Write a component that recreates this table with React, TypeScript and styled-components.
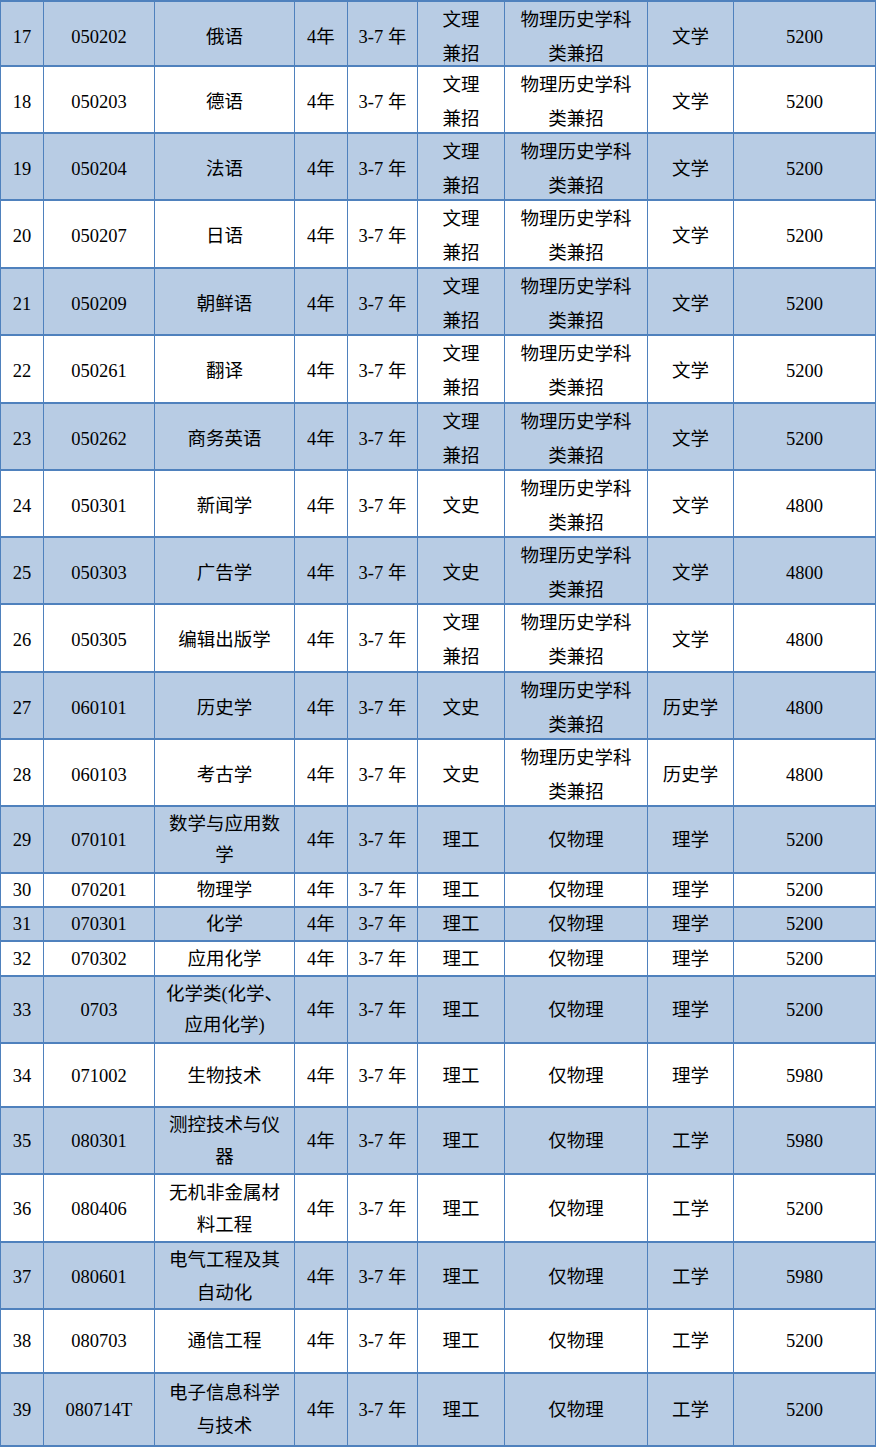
import React from "react";
import styled, { createGlobalStyle } from "styled-components";

const GlobalStyle = createGlobalStyle`
  html, body { margin: 0; padding: 0; background: #ffffff; }
  body { font-family: "Liberation Serif", "Noto Sans CJK SC", serif; color: #000; }
`;

const LINE = "#4f81bd";
const SHADE = "#b8cce4";

const Table = styled.div`
  width: 876px;
  border-top: 2px solid ${LINE};
  border-left: 1px solid ${LINE};
  box-sizing: border-box;
  display: flex;
  flex-direction: column;
`;

const Row = styled.div<{ $h: number; $shade: boolean; $lh: number }>`
  display: grid;
  grid-template-columns: 43px 111px 140px 53px 70px 87px 143px 86px 142px;
  height: ${(p) => p.$h}px;
  line-height: ${(p) => p.$lh}px;
  box-sizing: border-box;
  border-bottom: 2px solid ${LINE};
  background: ${(p) => (p.$shade ? SHADE : "#ffffff")};
`;

const Cell = styled.div`
  box-sizing: border-box;
  border-right: 1px solid ${LINE};
  padding-top: 1px;
  display: flex;
  flex-direction: column;
  align-items: center;
  justify-content: center;
  font-family: "Liberation Serif", "Noto Sans CJK SC", serif;
  font-size: 18.5px;
  text-align: center;
  white-space: nowrap;
`;

const Line = styled.span`
  display: block;
`;

type R = {
  no: string;
  code: string;
  name: string[];
  cls: string[];
  req: string[];
  cat: string;
  fee: string;
  h: number;
  lh: number;
};

const WL = ["文理", "兼招"];
const WS = ["文史"];
const LG = ["理工"];
const PH = ["物理历史学科", "类兼招"];
const OP = ["仅物理"];

const rows: R[] = [
  { no: "17", code: "050202", name: ["俄语"], cls: WL, req: PH, cat: "文学", fee: "5200", h: 65, lh: 34 },
  { no: "18", code: "050203", name: ["德语"], cls: WL, req: PH, cat: "文学", fee: "5200", h: 67, lh: 34 },
  { no: "19", code: "050204", name: ["法语"], cls: WL, req: PH, cat: "文学", fee: "5200", h: 67, lh: 34 },
  { no: "20", code: "050207", name: ["日语"], cls: WL, req: PH, cat: "文学", fee: "5200", h: 68, lh: 34 },
  { no: "21", code: "050209", name: ["朝鲜语"], cls: WL, req: PH, cat: "文学", fee: "5200", h: 67, lh: 34 },
  { no: "22", code: "050261", name: ["翻译"], cls: WL, req: PH, cat: "文学", fee: "5200", h: 68, lh: 34 },
  { no: "23", code: "050262", name: ["商务英语"], cls: WL, req: PH, cat: "文学", fee: "5200", h: 67, lh: 34 },
  { no: "24", code: "050301", name: ["新闻学"], cls: WS, req: PH, cat: "文学", fee: "4800", h: 67, lh: 34 },
  { no: "25", code: "050303", name: ["广告学"], cls: WS, req: PH, cat: "文学", fee: "4800", h: 67, lh: 34 },
  { no: "26", code: "050305", name: ["编辑出版学"], cls: WL, req: PH, cat: "文学", fee: "4800", h: 68, lh: 34 },
  { no: "27", code: "060101", name: ["历史学"], cls: WS, req: PH, cat: "历史学", fee: "4800", h: 67, lh: 34 },
  { no: "28", code: "060103", name: ["考古学"], cls: WS, req: PH, cat: "历史学", fee: "4800", h: 67, lh: 34 },
  { no: "29", code: "070101", name: ["数学与应用数", "学"], cls: LG, req: OP, cat: "理学", fee: "5200", h: 67, lh: 31 },
  { no: "30", code: "070201", name: ["物理学"], cls: LG, req: OP, cat: "理学", fee: "5200", h: 34, lh: 31 },
  { no: "31", code: "070301", name: ["化学"], cls: LG, req: OP, cat: "理学", fee: "5200", h: 34, lh: 31 },
  { no: "32", code: "070302", name: ["应用化学"], cls: LG, req: OP, cat: "理学", fee: "5200", h: 35, lh: 31 },
  { no: "33", code: "0703", name: ["化学类(化学、", "应用化学)"], cls: LG, req: OP, cat: "理学", fee: "5200", h: 67, lh: 31 },
  { no: "34", code: "071002", name: ["生物技术"], cls: LG, req: OP, cat: "理学", fee: "5980", h: 64, lh: 32 },
  { no: "35", code: "080301", name: ["测控技术与仪", "器"], cls: LG, req: OP, cat: "工学", fee: "5980", h: 67, lh: 32 },
  { no: "36", code: "080406", name: ["无机非金属材", "料工程"], cls: LG, req: OP, cat: "工学", fee: "5200", h: 68, lh: 32 },
  { no: "37", code: "080601", name: ["电气工程及其", "自动化"], cls: LG, req: OP, cat: "工学", fee: "5980", h: 67, lh: 33 },
  { no: "38", code: "080703", name: ["通信工程"], cls: LG, req: OP, cat: "工学", fee: "5200", h: 64, lh: 33 },
  { no: "39", code: "080714T", name: ["电子信息科学", "与技术"], cls: LG, req: OP, cat: "工学", fee: "5200", h: 73, lh: 33 },
];

const Lines = ({ items }: { items: string[] }) => (
  <>
    {items.map((t, i) => (
      <Line key={i}>{t}</Line>
    ))}
  </>
);

export default function App() {
  return (
    <>
      <GlobalStyle />
      <Table>
        {rows.map((r) => (
          <Row key={r.no} $h={r.h} $lh={r.lh} $shade={parseInt(r.no, 10) % 2 === 1}>
            <Cell>{r.no}</Cell>
            <Cell>{r.code}</Cell>
            <Cell>
              <Lines items={r.name} />
            </Cell>
            <Cell>4年</Cell>
            <Cell>3-7 年</Cell>
            <Cell>
              <Lines items={r.cls} />
            </Cell>
            <Cell>
              <Lines items={r.req} />
            </Cell>
            <Cell>{r.cat}</Cell>
            <Cell>{r.fee}</Cell>
          </Row>
        ))}
      </Table>
    </>
  );
}
